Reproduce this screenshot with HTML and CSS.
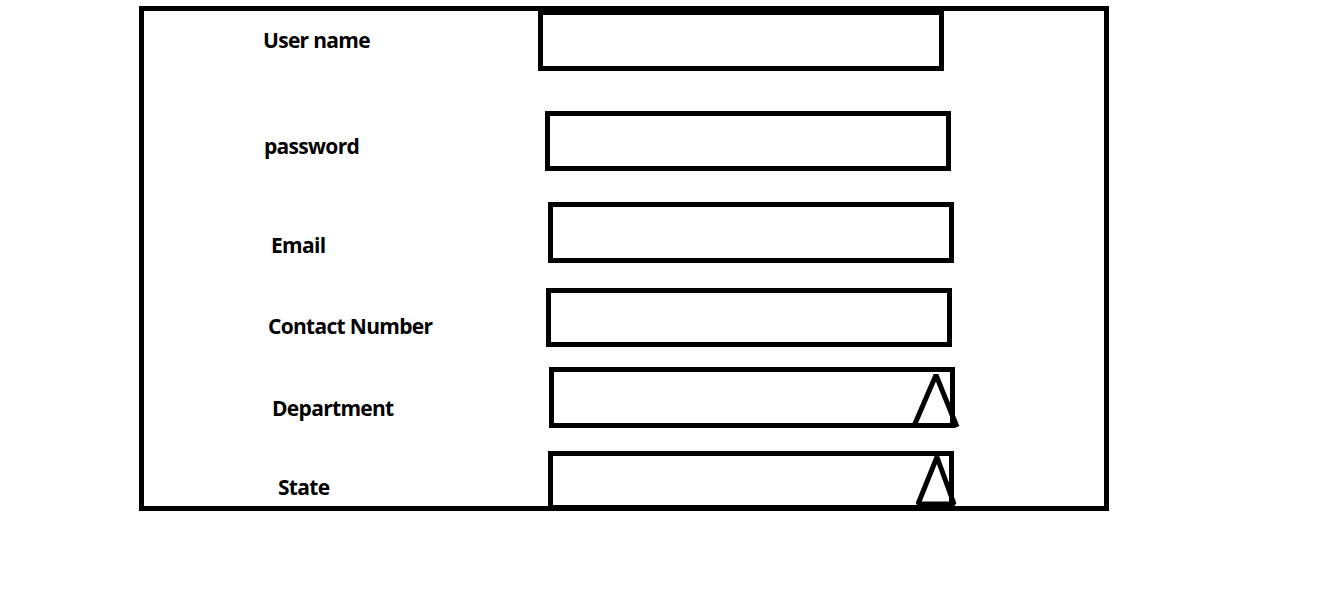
FILE: index.html
```html
<!DOCTYPE html>
<html lang="en">
<head>
<meta charset="utf-8">
<title>Registration form sketch</title>
<link rel="stylesheet" href="styles.css">
</head>
<body>
<form class="frame">
  <div class="row row--user">
    <label class="label">User name</label>
    <div class="field"></div>
  </div>
  <div class="row row--pass">
    <label class="label">password</label>
    <div class="field"></div>
  </div>
  <div class="row row--email">
    <label class="label">Email</label>
    <div class="field"></div>
  </div>
  <div class="row row--contact">
    <label class="label">Contact Number</label>
    <div class="field"></div>
  </div>
  <div class="row row--dept">
    <label class="label">Department</label>
    <div class="field">
      <svg class="caret" width="420" height="70" viewBox="0 0 420 70">
        <polyline points="365,59 387,8 408,60" fill="none" stroke="#000" stroke-width="5" stroke-linejoin="bevel"/>
      </svg>
    </div>
  </div>
  <div class="row row--state">
    <label class="label">State</label>
    <div class="field">
      <svg class="caret" width="420" height="70" viewBox="0 0 420 70">
        <polygon points="370,53 389,6 406,53" fill="none" stroke="#000" stroke-width="5" stroke-linejoin="bevel"/>
      </svg>
    </div>
  </div>
</form>
</body>
</html>
```

FILE: styles.css
```css
html, body {
  margin: 0;
  padding: 0;
  background: #fff;
}

.frame {
  box-sizing: border-box;
  width: 970px;
  height: 505px;
  margin: 6px 0 0 139px;
  border: 5px solid #000;
  display: flex;
  flex-direction: column;
}

.row {
  display: grid;
  grid-template-columns: 394px 1fr;
  align-items: start;
  margin-top: var(--gap);
}

.label {
  font-family: "Open Sans", "Noto Sans", sans-serif;
  font-weight: 700;
  font-size: 21px;
  line-height: 20px;
  letter-spacing: -0.7px;
  color: #000;
  white-space: nowrap;
  padding-left: var(--lx);
  margin-top: var(--ly);
}

.field {
  position: relative;
  box-sizing: border-box;
  width: 406px;
  height: var(--fh);
  margin-left: var(--fx);
  border: 5px solid #000;
  background: #fff;
}

.caret {
  position: absolute;
  left: -5px;
  top: -5px;
  overflow: visible;
}

.row--user    { --gap: -1px; --lx: 119px; --ly: 20px; --fx: 0px;  --fh: 61px; }
.row--pass    { --gap: 40px; --lx: 120px; --ly: 25px; --fx: 7px;  --fh: 60px; }
.row--email   { --gap: 31px; --lx: 127px; --ly: 33px; --fx: 10px; --fh: 61px; }
.row--contact { --gap: 25px; --lx: 124px; --ly: 28px; --fx: 8px;  --fh: 59px; }
.row--dept    { --gap: 20px; --lx: 128px; --ly: 31px; --fx: 11px; --fh: 61px; }
.row--state   { --gap: 23px; --lx: 134px; --ly: 26px; --fx: 10px; --fh: 59px; }
```
